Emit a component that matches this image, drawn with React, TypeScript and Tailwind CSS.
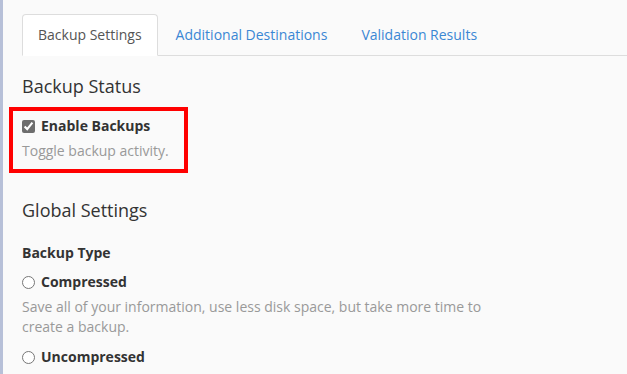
import React from "react";

const tabs = ["Backup Settings", "Additional Destinations", "Validation Results"];

export default function App() {
  return (
    <div
      className="min-h-[374px] bg-[#fafafa] border-l-[3px] border-[#b7c0d8] pl-[19px] pt-[14px] text-[14px] text-[#333]"
      style={{ fontFamily: '"Open Sans", "Noto Sans", sans-serif' }}
    >
      {/* Tabs */}
      <ul className="flex border-b border-[#ddd]">
        {tabs.map((t, i) => (
          <li key={t} className="mr-[2px] -mb-px">
            <div
              className={
                i === 0
                  ? "px-[15px] py-[10px] leading-5 bg-white border border-[#ddd] border-b-white rounded-t-[4px] text-[#555]"
                  : "px-[15px] py-[10px] leading-5 border border-transparent text-[#3a87d4]"
              }
            >
              {t}
            </div>
          </li>
        ))}
      </ul>

      {/* Backup Status */}
      <h2 className="mt-[17px] text-[18px] leading-[26px] font-normal">Backup Status</h2>
      <div className="mt-[8px] -ml-[13px] w-[179px] border-4 border-[#ff0000] pl-[9px] pt-[5px] pb-[8px]">
        <label className="flex items-center gap-[6px] leading-5 font-bold">
          <input
            type="checkbox"
            defaultChecked
            className="w-[13px] h-[13px] m-0 accent-[#6d6d6d]"
          />
          Enable Backups
        </label>
        <p className="mt-[5px] leading-5 text-[#999]">Toggle backup activity.</p>
      </div>

      {/* Global Settings */}
      <h2 className="mt-[24px] text-[18px] leading-[26px] font-normal">Global Settings</h2>
      <div className="mt-[20px] leading-5 font-bold">Backup Type</div>
      <label className="mt-[9px] flex items-center gap-[6px] leading-5 font-bold">
        <input type="radio" name="type" className="w-[13px] h-[13px] m-0" />
        Compressed
      </label>
      <p className="mt-[5px] w-[470px] leading-5 text-[#999]">
        Save all of your information, use less disk space, but take more time to create a backup.
      </p>
      <label className="mt-[10px] flex items-center gap-[6px] leading-5 font-bold">
        <input type="radio" name="type" className="w-[13px] h-[13px] m-0" />
        Uncompressed
      </label>
    </div>
  );
}
